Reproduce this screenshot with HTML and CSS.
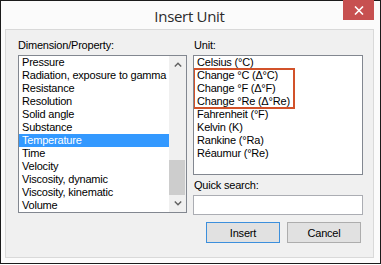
FILE: index.html
```html
<!DOCTYPE html>
<html>
    <head>
        <meta charset="utf-8">
        <title>Insert Unit</title>
        <link rel="stylesheet" href="styles.css">
    </head>
    <body>
        <div class="window">
            <header class="titlebar">
                <span class="title">Insert Unit</span>
                <button type="button" class="close">
                    <svg width="10" height="9" viewBox="0 0 10 9">
                        <path d="M1 0.5 L9 8.5 M9 0.5 L1 8.5" stroke="#fff" stroke-width="1.6" fill="none"/>
                    </svg>
                </button>
            </header>

            <main class="panel">
                <section class="col left">
                    <div class="label">Dimension/Property:</div>
                    <div class="listbox dims">
                        <ul class="items">
                            <li>Pressure</li>
                            <li>Radiation, exposure to gamma rays</li>
                            <li>Resistance</li>
                            <li>Resolution</li>
                            <li>Solid angle</li>
                            <li>Substance</li>
                            <li class="selected">Temperature</li>
                            <li>Time</li>
                            <li>Velocity</li>
                            <li>Viscosity, dynamic</li>
                            <li>Viscosity, kinematic</li>
                            <li>Volume</li>
                        </ul>
                        <div class="scrollbar">
                            <div class="arrow">
                                <svg width="8" height="5" viewBox="0 0 8 5"><path d="M0.8 4.4 L4 1.2 L7.2 4.4" stroke="#606060" stroke-width="1.4" fill="none"/></svg>
                            </div>
                            <div class="track"><div class="thumb"></div></div>
                            <div class="arrow">
                                <svg width="8" height="5" viewBox="0 0 8 5"><path d="M0.8 0.6 L4 3.8 L7.2 0.6" stroke="#606060" stroke-width="1.4" fill="none"/></svg>
                            </div>
                        </div>
                    </div>
                </section>

                <section class="col right">
                    <div class="label">Unit:</div>
                    <div class="listbox units">
                        <ul class="items">
                            <li>Celsius (°C)</li>
                            <li class="marked">
                                <div>Change °C (Δ°C)</div>
                                <div>Change °F (Δ°F)</div>
                                <div>Change °Re (Δ°Re)</div>
                            </li>
                            <li>Fahrenheit (°F)</li>
                            <li>Kelvin (K)</li>
                            <li>Rankine (°Ra)</li>
                            <li>Réaumur (°Re)</li>
                        </ul>
                    </div>

                    <div class="label search-label">Quick search:</div>
                    <input type="text" class="search" value="">

                    <div class="buttons">
                        <button type="button" class="btn default">Insert</button>
                        <button type="button" class="btn">Cancel</button>
                    </div>
                </section>
            </main>
        </div>
    </body>
</html>
```

FILE: styles.css
```css
body
{
    margin: 0;
    background-color: #ffffff;
    font-family: "Liberation Sans", Arial, sans-serif;
    font-size: 11px;
    letter-spacing: -0.2px;
    color: #000000;
}

.window
{
    width: 381px;
    height: 264px;
    box-sizing: border-box;
    border: 1px solid #1b1b1b;
    background-color: #fbfbfb;
    padding: 0 6px 5px 4px;
    display: flex;
    flex-direction: column;
}

.titlebar
{
    height: 28px;
    display: grid;
    grid-template-columns: 1fr auto 1fr;
    align-items: center;
}

.title
{
    grid-column: 2;
    font-family: "Open Sans", "Noto Sans", sans-serif;
    font-size: 15px;
    letter-spacing: -0.3px;
    color: #2b2b2b;
    padding-top: 1px;
}

.close
{
    grid-column: 3;
    justify-self: end;
    align-self: start;
    margin: -1px 0 0 0;
    width: 31px;
    height: 20px;
    border: none;
    padding: 0;
    background-color: #c75050;
    display: flex;
    align-items: center;
    justify-content: center;
}

.panel
{
    flex: 1;
    border: 1px solid #d9d9d9;
    background-color: #f0f0f0;
    padding: 9px 10px 0 12px;
    display: flex;
    gap: 6px;
}

.col
{
    display: flex;
    flex-direction: column;
}

.left
{
    width: 169px;
}

.right
{
    width: 170px;
}

.label
{
    line-height: 13px;
    height: 13px;
    margin-bottom: 3px;
    white-space: nowrap;
}

.right .label
{
    padding-left: 1px;
}

.listbox
{
    box-sizing: border-box;
    border: 1px solid #828790;
    background-color: #ffffff;
    display: flex;
    overflow: hidden;
}

.dims
{
    height: 158px;
}

.units
{
    height: 120px;
}

.items
{
    list-style: none;
    margin: 0;
    padding: 0;
    flex: 1;
    min-width: 0;
}

.items li
{
    line-height: 13px;
    padding-left: 3px;
    white-space: nowrap;
    overflow: hidden;
}

.items li.selected
{
    background-color: #3399ff;
    color: #ffffff;
}

.items li.marked
{
    width: fit-content;
    padding-right: 4px;
    outline: 2px solid #d2522a;
    outline-offset: -1px;
}

.scrollbar
{
    width: 17px;
    background-color: #f0f0f0;
    display: flex;
    flex-direction: column;
}

.arrow
{
    height: 17px;
    display: flex;
    align-items: center;
    justify-content: center;
}

.track
{
    flex: 1;
}

.thumb
{
    margin: 87px 1px 0 0;
    height: 35px;
    background-color: #cdcdcd;
}

.search-label
{
    margin-top: 4px;
}

.search
{
    box-sizing: border-box;
    height: 20px;
    width: 170px;
    margin: 0;
    border: 1px solid #abadb3;
    background-color: #ffffff;
}

.buttons
{
    display: flex;
    justify-content: flex-end;
    gap: 7px;
    margin: 7px 2px 0 0;
}

.btn
{
    width: 74px;
    height: 21px;
    padding: 0;
    border: 1px solid #adadad;
    background-color: #e1e1e1;
    font-family: "Liberation Sans", Arial, sans-serif;
    font-size: 11px;
    letter-spacing: -0.2px;
    color: #000000;
}

.btn.default
{
    border-color: #3c8fdc;
}
```
